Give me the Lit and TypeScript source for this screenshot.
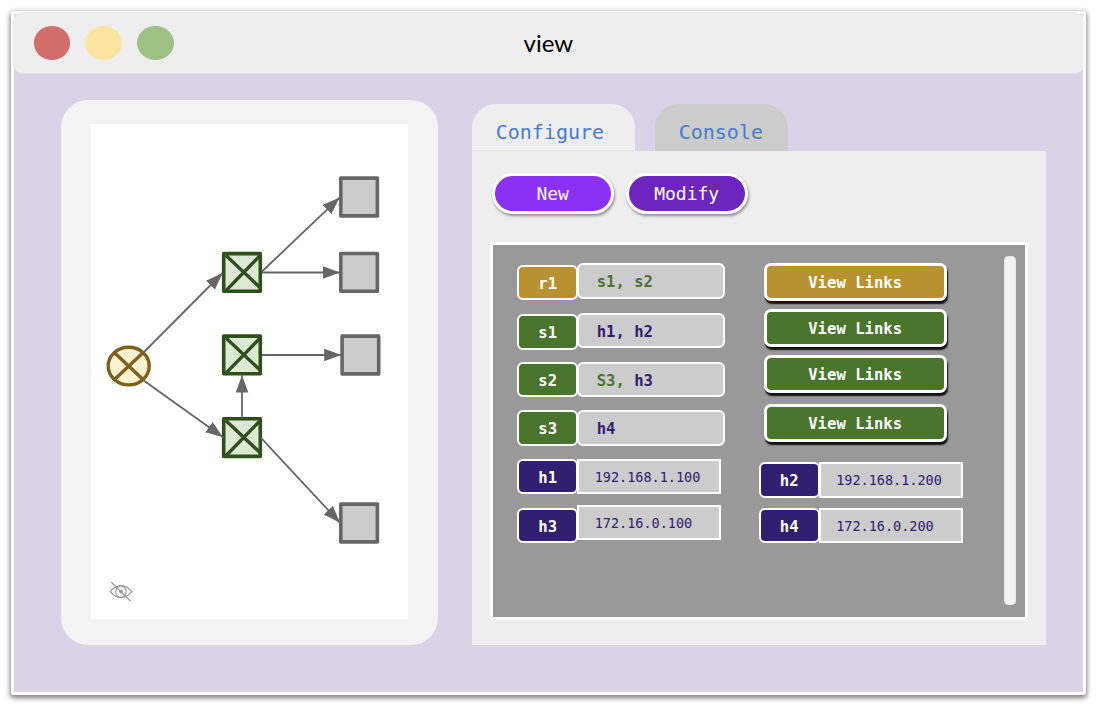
import { LitElement, html, svg, css } from "lit";
import { customElement } from "lit/decorators.js";

type Tone = "gold" | "green" | "navy";
interface Tag { name: string; tone: Tone; gap: number }
interface Field { parts: { text: string; tone: Tone }[]; ip?: boolean; gap: number }

const tags: Tag[] = [
  { name: "r1", tone: "gold", gap: 1.5 },
  { name: "s1", tone: "green", gap: 14 },
  { name: "s2", tone: "green", gap: 12.3 },
  { name: "s3", tone: "green", gap: 13 },
  { name: "h1", tone: "navy", gap: 13 },
  { name: "h3", tone: "navy", gap: 13.2 },
];
const fields: Field[] = [
  { parts: [{ text: "s1, s2", tone: "green" }], gap: 0 },
  { parts: [{ text: "h1, h2", tone: "navy" }], gap: 14 },
  { parts: [{ text: "S3, ", tone: "green" }, { text: "h3", tone: "navy" }], gap: 13.5 },
  { parts: [{ text: "h4", tone: "navy" }], gap: 13 },
  { parts: [{ text: "192.168.1.100", tone: "navy" }], ip: true, gap: 13 },
  { parts: [{ text: "172.16.0.100", tone: "navy" }], ip: true, gap: 10.8 },
];
const links: { tone: Tone; gap: number }[] = [
  { tone: "gold", gap: 0.3 },
  { tone: "green", gap: 7.7 },
  { tone: "green", gap: 8 },
  { tone: "green", gap: 10.5 },
];
const hosts = [
  { name: "h2", ip: "192.168.1.200", gap: 20.8 },
  { name: "h4", ip: "172.16.0.200", gap: 10 },
];

@customElement("topology-map")
class TopologyMap extends LitElement {
  static styles = css`
    :host { display: block; width: 317px; height: 494.5px; background: #fff; }
    svg { display: block; }
    .edge { stroke: #666; stroke-width: 1.8; fill: none; }
    .host { fill: #ccc; stroke: #666; stroke-width: 3.6; stroke-linejoin: round; }
    .switch { fill: #dce9d5; stroke: #2f4f1c; stroke-width: 3.6; stroke-linejoin: round; }
    .cross { stroke: #2f4f1c; stroke-width: 3.4; }
    .router { fill: #fcf1d0; stroke: #7d601a; stroke-width: 3.4; }
    .eye { fill: none; stroke: #999; stroke-width: 1.2; }
  `;
  render() {
    const edges = [
      [143.5, 352.5, 222.6, 273], [143, 380, 223, 437.3], [262, 271.5, 339.6, 197.6],
      [262, 272.5, 340, 272.5], [262, 355, 341.5, 355], [242, 418, 242, 375.3], [261, 437.8, 340, 522.8],
    ];
    return html`<svg width="317" height="494.5" viewBox="91 124 317 494.5">
      <defs><marker id="head" markerUnits="userSpaceOnUse" markerWidth="18" markerHeight="14" refX="17.3" refY="6.5" orient="auto">
        <path d="M0 0.2L17.3 6.5L0 12.8Z" fill="#666"/></marker></defs>
      ${[[340.8, 178.1], [340.8, 253.5], [342.1, 336.1], [340.8, 504.1]].map(
        ([x, y]) => svg`<rect class="host" x=${x} y=${y} width="36.6" height="37.8"/>`)}
      ${[253.6, 336.1, 418.7].map((y) => svg`<rect class="switch" x="223.7" y=${y} width="36.6" height="37.7"/>
        <path class="cross" d="M226 ${y + 2}L261 ${y + 34.8}M260 ${y + 2}L226 ${y + 37}"/>`)}
      <ellipse class="router" cx="128.7" cy="366.1" rx="20.5" ry="18.8"/>
      <path class="router" d="M114.5 352.8L143 379.5M143 352.8L114.5 379.5"/>
      ${edges.map(([a, b, c, d]) => svg`<path class="edge" d="M${a} ${b}L${c} ${d}" marker-end="url(#head)"/>`)}
      <g class="eye">
        <path d="M110.2 591.7Q115 585.7 121 585.7T131.8 591.7Q127 597.6 121 597.6T110.2 591.7Z"/>
        <ellipse cx="121" cy="591.6" rx="5.2" ry="5.8"/>
        <circle cx="121" cy="591.6" r="1.3" fill="#888"/>
        <path d="M111.3 582.2L130.6 601.3"/>
      </g>
    </svg>`;
  }
}

@customElement("app-root")
class AppRoot extends LitElement {
  static styles = css`
    :host { display: block; width: 1098px; height: 706px; background: #fff; overflow: hidden;
      font-family: "DejaVu Sans Mono", monospace; }
    * { box-sizing: border-box; }
    .page { padding: 11px; height: 706px; }
    .window { width: 1075px; height: 684px; border: 3px solid #fff; border-radius: 3px;
      background: #d9d3e8; box-shadow: 0 2px 5px 1px rgba(0, 0, 0, .5); }
    .title { display: flex; align-items: center; margin: -2px -1px 0; height: 61.5px; width: 1071px;
      padding: 1px 21px 0 20.7px; border-radius: 10px; background: #eee; border-bottom: 1px solid #e6e4ec; }
    .dots { display: flex; gap: 14.8px; width: 200px; }
    .dot { width: 36.8px; height: 34px; border-radius: 50%; }
    .red { background: #d16d6a; }
    .yellow { background: #fae5a0; }
    .lime { background: #9dc284; }
    .name { flex: 1; text-align: center; padding: 0 200px 0 0; font: 24px Lato, sans-serif; color: #000; }
    .body { display: flex; align-items: flex-start; padding: 26.3px 0 0 47.3px; gap: 33.7px; }
    .left { width: 376.7px; height: 545.3px; border-radius: 27px; background: #f3f3f3; padding: 24.3px 0 0 29.7px; }
    .right { width: 574.3px; padding-top: 4.2px; }
    .tabs { display: flex; gap: 20px; height: 46.7px; }
    .tab { width: 163px; border-radius: 24px 24px 0 0; background: #eee; color: #467bd3; font-size: 20px;
      line-height: 56px; padding-left: 24px; border-bottom: 1px solid #e7e7e7; }
    .tab.off { width: 133.8px; background: #ccc; border: 0; }
    .panel { height: 494.5px; background: #eee; padding: 22.5px 0 0 18.5px; }
    .actions { display: flex; gap: 12px; padding-left: 1.5px; height: 68.5px; }
    .pill { width: 122px; height: 40.7px; border: 3.5px solid #fff; border-radius: 21px; color: #fff;
      font-size: 18px; line-height: 36px; text-align: center; box-shadow: 1px 2px 3px rgba(0, 0, 0, .4); }
    .new { background: #8c30f5; }
    .modify { background: #6c25be; }
    .board { display: flex; align-items: flex-start; width: 537.5px; height: 378.5px; background: #999;
      border: 3px solid #fff; border-radius: 2px; padding: 18.5px 0 0 24px; }
    .col { display: flex; flex-direction: column; flex: none; }
    .tag { width: 61px; height: 35.5px; border: 2px solid #fff; border-radius: 6px; color: #fff;
      font-weight: bold; font-size: 15.6px; line-height: 34px; text-align: center; }
    .gold { background: #b89230; }
    .green { background: #49752c; }
    .navy { background: #30206f; }
    .field { width: 148px; height: 35.5px; border: 2px solid #fff; border-radius: 6px; background: #ccc;
      font-weight: bold; font-size: 15.6px; line-height: 34px; padding-left: 17.5px; white-space: pre; }
    .ip { width: 144px; border-radius: 0; font-weight: normal; font-size: 13.5px; line-height: 32px; padding-left: 15.5px; }
    .t-green { color: #49752c; }
    .t-navy { color: #30206f; }
    .second { margin-left: 33.5px; width: 204px; }
    .link { margin-left: 5px; width: 183px; height: 38px; border: 3.5px solid #fff; border-radius: 7px; color: #fff;
      font-weight: bold; font-size: 15.6px; line-height: 35px; text-align: center; box-shadow: 1px 3px 1.5px #111; }
    .pair { display: flex; }
    .fields { margin-left: -1px; }
    .scroll { margin: -7.5px 0 0 41.5px; width: 11.5px; height: 349.5px; border-radius: 4px; background: #f3f3f3; border: 1px solid #e6e6e6; flex: none; }
  `;
  render() {
    return html`<div class="page"><div class="window">
      <div class="title">
        <div class="dots"><div class="dot red"></div><div class="dot yellow"></div><div class="dot lime"></div></div>
        <div class="name">view</div>
      </div>
      <div class="body">
        <div class="left"><topology-map></topology-map></div>
        <div class="right">
          <div class="tabs"><div class="tab">Configure</div><div class="tab off">Console</div></div>
          <div class="panel">
            <div class="actions"><div class="pill new">New</div><div class="pill modify">Modify</div></div>
            <div class="board">
              <div class="col">${tags.map((t) => html`<div class="tag ${t.tone}" style="margin-top:${t.gap}px">${t.name}</div>`)}</div>
              <div class="col fields">${fields.map((f) => html`<div class="field ${f.ip ? "ip" : ""}" style="margin-top:${f.gap}px">${f.parts.map((p) => html`<span class="t-${p.tone}">${p.text}</span>`)}</div>`)}</div>
              <div class="col second">
                ${links.map((l) => html`<div class="link ${l.tone}" style="margin-top:${l.gap}px">View Links</div>`)}
                ${hosts.map((h) => html`<div class="pair" style="margin-top:${h.gap}px"><div class="tag navy">${h.name}</div><div class="field ip fields"><span class="t-navy">${h.ip}</span></div></div>`)}
              </div>
              <div class="scroll"></div>
            </div>
          </div>
        </div>
      </div>
    </div></div>`;
  }
}
